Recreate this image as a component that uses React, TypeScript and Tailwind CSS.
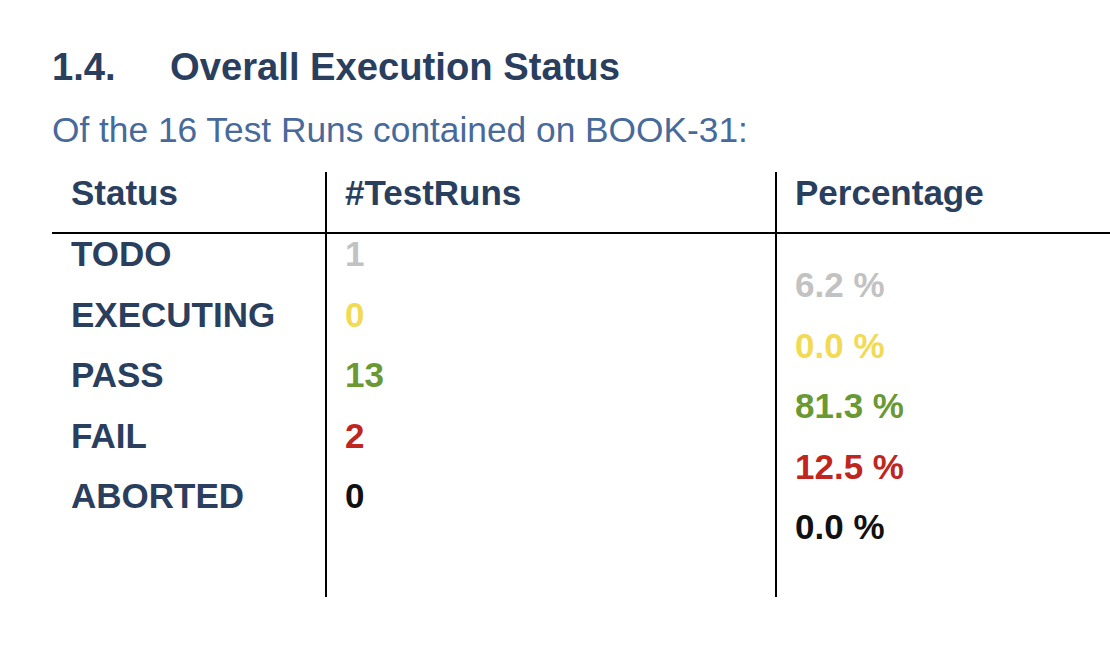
import React from "react";

const rows = [
  { s: "TODO", n: "1", p: "6.2 %", c: "text-[#c2c2c2]" },
  { s: "EXECUTING", n: "0", p: "0.0 %", c: "text-[#f2da55]" },
  { s: "PASS", n: "13", p: "81.3 %", c: "text-[#6a9934]" },
  { s: "FAIL", n: "2", p: "12.5 %", c: "text-[#bf261f]" },
  { s: "ABORTED", n: "0", p: "0.0 %", c: "text-[#111111]" },
];

export default function App() {
  return (
    <div
      className="w-[1110px] h-[648px] overflow-hidden bg-white pl-[52px] pt-[45px]"
      style={{ fontFamily: '"Liberation Sans", Arial, sans-serif' }}
    >
      <h1 className="flex text-[38.2px] leading-[44px] font-bold text-[#2a3e5e]">
        <span className="w-[118px]">1.4.</span>
        <span>Overall Execution Status</span>
      </h1>
      <p className="mt-[21px] text-[35.3px] leading-[40px] text-[#476a9a]">
        Of the 16 Test Runs contained on BOOK-31:
      </p>
      <div className="mt-[22px] grid grid-cols-[273px_450px_1fr] text-[35px] leading-[40px] font-bold">
        <div className="flex flex-col">
          <div className="h-[62px] border-b-2 border-black pl-[19px] pt-[1px] text-[#2a3e5e]">Status</div>
          <div className="h-[363px] flex flex-col">
            {rows.map((r) => (
              <div key={r.s} className="h-[60.5px] pl-[19px] text-[#2a3e5e]">
                {r.s}
              </div>
            ))}
          </div>
        </div>
        <div className="flex flex-col border-l-2 border-black">
          <div className="h-[62px] border-b-2 border-black pl-[18px] pt-[1px] text-[#2a3e5e]">#TestRuns</div>
          <div className="h-[363px] flex flex-col">
            {rows.map((r) => (
              <div key={r.s} className={`h-[60.5px] pl-[18px] ${r.c}`}>
                {r.n}
              </div>
            ))}
          </div>
        </div>
        <div className="flex flex-col border-l-2 border-black">
          <div className="h-[62px] border-b-2 border-black pl-[18px] pt-[1px] text-[#2a3e5e]">Percentage</div>
          <div className="h-[363px] flex flex-col pt-[31px]">
            {rows.map((r) => (
              <div key={r.s} className={`h-[60.5px] shrink-0 pl-[18px] ${r.c}`}>
                {r.p}
              </div>
            ))}
          </div>
        </div>
      </div>
    </div>
  );
}
